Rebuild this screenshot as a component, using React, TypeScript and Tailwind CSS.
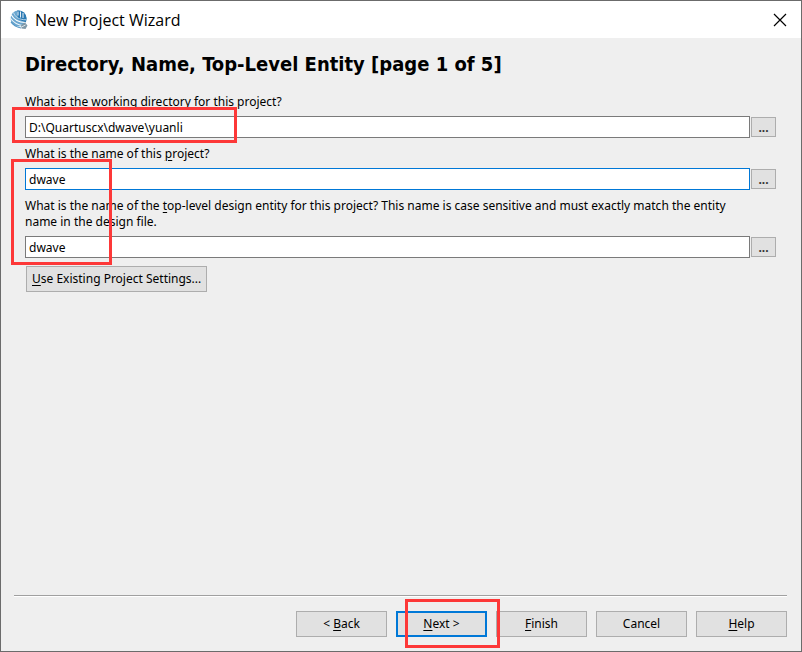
import clsx from 'clsx'
import type { ReactNode } from 'react'

interface BrowseFieldProps {
  id: string
  label: ReactNode
  value: string
  active?: boolean
}

// Underlined access key inside a label or button
const Key = ({ children }: { children: string }) => (
  <span className="underline decoration-1 underline-offset-2">{children}</span>
)

// Red annotation frame drawn over the dialog
const Marker = ({ className }: { className: string }) => (
  <div
    aria-hidden="true"
    className={clsx(
      'pointer-events-none absolute border-3 border-[#fd3838]',
      className
    )}
  />
)

const AppIcon = () => (
  <svg aria-hidden="true" className="h-5 w-5" viewBox="0 0 20 20">
    <circle cx="9.500" cy="8.500" fill="#6aa6cf" r="8" />
    <path d="M8 .6a8 8 0 0 1 9.500 7.400c0 2-.3 3.500-1 4.500L9 9z" fill="#2a79b3" />
    <path d="M.8 7.500C4 12 9 15.500 15 15.500" fill="none" stroke="#eef6fb" strokeWidth="1.200" />
    <path d="M2 4.500C5 10 10 12.500 16.500 12.500" fill="none" stroke="#fff" strokeWidth="1.100" />
    <path d="M4.500 2.500C6 7 10 9.800 17 9.800" fill="none" stroke="#d5e9f5" strokeWidth=".8" />
    <path d="M2 12c2 3 5 5 10 6" fill="none" stroke="#4f94c4" strokeWidth="1.200" />
    <path d="M9 1.500v4M11.500 1.500v6M14 3v5" stroke="#fff" strokeWidth=".9" />
    <path d="M12 15l4-2.500 2.500 3-2 3.500-4-.5z" fill="#7f98a8" />
    <path d="M12.500 17l4-2" stroke="#e5edf2" strokeWidth=".9" />
  </svg>
)

const BrowseField = ({ id, label, value, active = false }: BrowseFieldProps) => (
  <div>
    <label className="block py-1.5 pr-8 leading-4" htmlFor={id}>
      {label}
    </label>
    <div className="flex items-center gap-px">
      <input
        className={clsx(
          'h-[22px] min-w-0 flex-1 border bg-white px-[3px] outline-none',
          active ? 'border-[#0078d7]' : 'border-[#7a7a7a]'
        )}
        defaultValue={value}
        id={id}
        type="text"
      />
      <button
        aria-label="Browse"
        className="h-5 w-[25px] border border-[#adadad] bg-[#e1e1e1] pt-0.5 leading-4 font-bold text-[#333]"
        type="button"
      >
        ...
      </button>
    </div>
  </div>
)

const WizardButton = ({
  children,
  primary = false,
}: {
  children: ReactNode
  primary?: boolean
}) => (
  <button
    className={clsx(
      'h-[26px] w-[91px] bg-[#e1e1e1]',
      primary ? 'border-2 border-[#0078d7]' : 'border border-[#adadad]'
    )}
    type="button"
  >
    {children}
  </button>
)

export default function App() {
  return (
    <div className="flex min-h-screen flex-col border border-[#6b6b6b] bg-[#efefef] font-['Noto_Sans',sans-serif] text-xs text-black">
      <header className="flex h-[37px] items-center bg-white pr-[13px] pl-2">
        <AppIcon />
        <span className="ml-1.5 flex-1 font-['Open_Sans',sans-serif] text-base">
          New Project Wizard
        </span>
        <button aria-label="Close" type="button">
          <svg
            className="h-4 w-4"
            fill="none"
            stroke="black"
            strokeWidth="1.200"
            viewBox="0 0 16 16"
          >
            <path d="M2 2l12 12M14 2L2 14" />
          </svg>
        </button>
      </header>

      <main className="flex-1 pt-3 pr-[25px] pl-6">
        <h1 className="mb-2.5 font-['DejaVu_Sans_Condensed','DejaVu_Sans',sans-serif] text-xl leading-7 font-bold">
          Directory, Name, Top-Level Entity [page 1 of 5]
        </h1>

        <div className="relative">
          <BrowseField
            id="directory"
            label="What is the working directory for this project?"
            value="D:\Quartuscx\dwave\yuanli"
          />
          <Marker className="-bottom-[5px] -left-[13px] h-9 w-[225px]" />
        </div>

        <div className="relative mt-0.5 space-y-0.5">
          <BrowseField
            active
            id="name"
            label={
              <>
                What is the name of this <Key>p</Key>roject?
              </>
            }
            value="dwave"
          />
          <BrowseField
            id="entity"
            label={
              <>
                What is the name of the <Key>t</Key>op-level design entity for
                this project? This name is case sensitive and must exactly match
                the entity name in the design file.
              </>
            }
            value="dwave"
          />
          <Marker className="-bottom-[7px] -left-3.5 h-[106px] w-[101px]" />
        </div>

        <button
          className="mt-2 ml-px block h-[26px] border border-[#adadad] bg-[#e1e1e1] px-[5px]"
          type="button"
        >
          <Key>U</Key>se Existing Project Settings...
        </button>
      </main>

      <footer className="mr-3.5 ml-[13px] border-t border-[#a0a0a0]">
        <div className="flex justify-end gap-[9px] border-t border-white py-3.5">
          <WizardButton>
            &lt; <Key>B</Key>ack
          </WizardButton>
          <div className="relative">
            <WizardButton primary>
              <Key>N</Key>ext &gt;
            </WizardButton>
            <Marker className="-top-3 left-[9px] h-[49px] w-[95px]" />
          </div>
          <WizardButton>
            <Key>F</Key>inish
          </WizardButton>
          <WizardButton>Cancel</WizardButton>
          <WizardButton>
            <Key>H</Key>elp
          </WizardButton>
        </div>
      </footer>
    </div>
  )
}
